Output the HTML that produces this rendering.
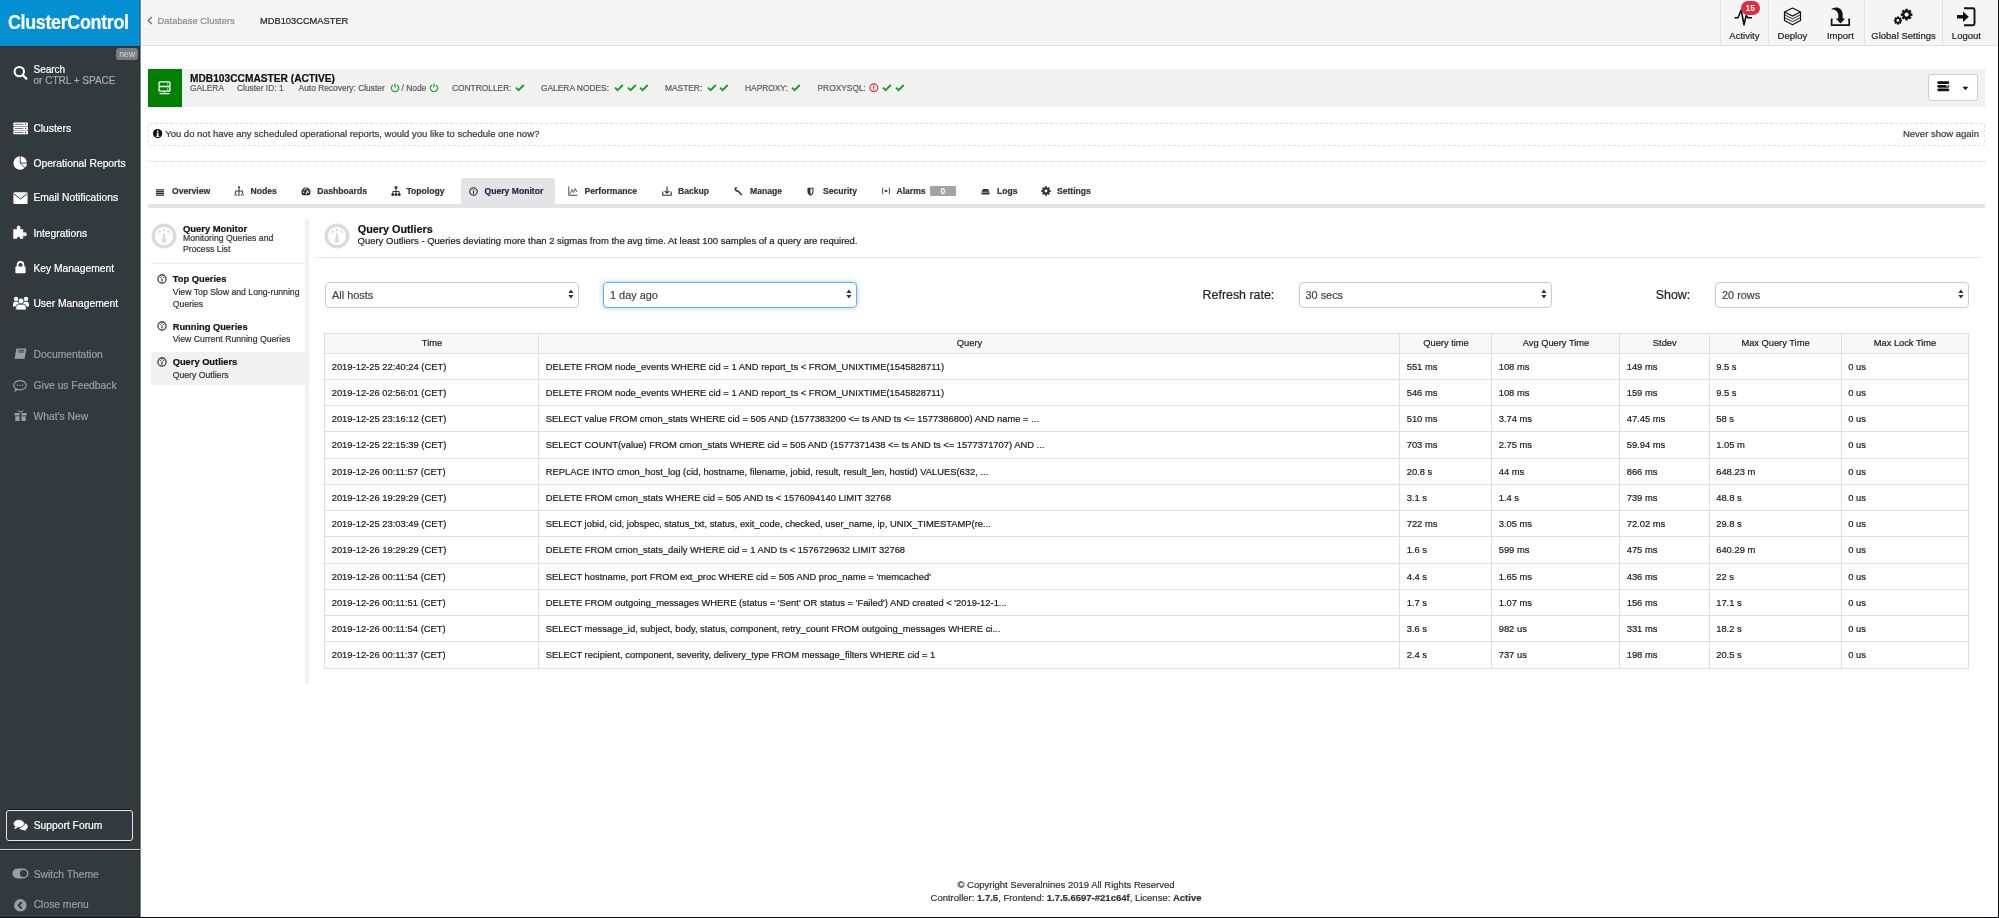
<!DOCTYPE html>
<html><head><meta charset="utf-8"><title>ClusterControl</title>
<style>
html,body{margin:0;padding:0;width:1999px;height:918px;overflow:hidden;background:#fff;position:relative;font-family:"Liberation Sans",sans-serif}
.t{position:absolute;white-space:nowrap}
body{-webkit-font-smoothing:antialiased}
.t{-webkit-text-stroke:0.2px currentColor}
#root{will-change:transform}
b{font-weight:700}
</style></head><body><div id="root" style="position:absolute;left:0;top:0;width:1999px;height:918px">
<div style="position:absolute;left:0px;top:0px;width:140px;height:918px;background:#333a3d"></div>
<div style="position:absolute;left:0px;top:0px;width:140px;height:46px;background:#0590d3"></div>
<div style="position:absolute;left:139px;top:0px;width:1px;height:46px;background:#0479b0"></div>
<div style="position:absolute;left:0px;top:46px;width:139px;height:1px;background:#2a3034"></div>
<div style="position:absolute;left:139px;top:46px;width:1px;height:872px;background:#262d33"></div>
<div class="t" style="left:8.00px;top:11.55px;font-size:20.50px;line-height:20.50px;color:#fff;font-weight:700;letter-spacing:-0.4px;transform:scaleX(0.875);transform-origin:0 0;">ClusterControl</div>
<div style="position:absolute;left:116.3px;top:48px;width:22px;height:12px;background:#7a7c7e;border-radius:3px;color:#d8d9da;font-size:8.8px;line-height:12px;text-align:center">new</div>
<svg style="position:absolute;left:13px;top:65px;" width="15" height="15" viewBox="0 0 15 15"><circle cx="6.3" cy="6.6" r="4.7" fill="none" stroke="#fff" stroke-width="2"/><path d="M9.8 10.1 L13.3 13.6" stroke="#fff" stroke-width="2.2" stroke-linecap="round"/></svg>
<div class="t" style="left:33.50px;top:64.83px;font-size:10.00px;line-height:10.00px;color:#fff;font-weight:400;">Search</div>
<div class="t" style="left:33.50px;top:76.23px;font-size:10.00px;line-height:10.00px;color:#a9abad;font-weight:400;">or CTRL + SPACE</div>
<div class="t" style="left:33.40px;top:124.08px;font-size:10.30px;line-height:10.30px;color:#fff;font-weight:400;">Clusters</div>
<div class="t" style="left:33.40px;top:158.78px;font-size:10.30px;line-height:10.30px;color:#fff;font-weight:400;">Operational Reports</div>
<div class="t" style="left:33.40px;top:193.48px;font-size:10.30px;line-height:10.30px;color:#fff;font-weight:400;">Email Notifications</div>
<div class="t" style="left:33.40px;top:229.38px;font-size:10.30px;line-height:10.30px;color:#fff;font-weight:400;">Integrations</div>
<div class="t" style="left:33.40px;top:263.68px;font-size:10.30px;line-height:10.30px;color:#fff;font-weight:400;">Key Management</div>
<div class="t" style="left:33.40px;top:298.98px;font-size:10.30px;line-height:10.30px;color:#fff;font-weight:400;">User Management</div>
<svg style="position:absolute;left:12.5px;top:121.5px;" width="15.5" height="13" viewBox="0 0 15.5 13"><rect x="0.4" y="0.4" width="14.6" height="3.7" fill="#fff" rx="0.6"/><rect x="1.8" y="1.9" width="8.6" height="0.8" fill="#333a3d" opacity="0.85"/><circle cx="12.6" cy="2.25" r="0.7" fill="#333a3d"/><rect x="0.4" y="4.5" width="14.6" height="3.7" fill="#fff" rx="0.6"/><rect x="1.8" y="6.0" width="8.6" height="0.8" fill="#333a3d" opacity="0.85"/><circle cx="12.6" cy="6.35" r="0.7" fill="#333a3d"/><rect x="0.4" y="8.6" width="14.6" height="3.7" fill="#fff" rx="0.6"/><rect x="1.8" y="10.1" width="8.6" height="0.8" fill="#333a3d" opacity="0.85"/><circle cx="12.6" cy="10.45" r="0.7" fill="#333a3d"/></svg>
<svg style="position:absolute;left:12.5px;top:155.5px;" width="15" height="15" viewBox="0 0 15 15"><circle cx="7.2" cy="7" r="6.8" fill="#fff"/><path d="M7.2 0 V7 H14.2 M7.2 7 L12 11.8" fill="none" stroke="#333a3d" stroke-width="0.9"/></svg>
<svg style="position:absolute;left:12.5px;top:192px;" width="15" height="12.5" viewBox="0 0 15 12.5"><rect x="0.4" y="0.3" width="14.2" height="11.6" rx="1.2" fill="#fff"/><path d="M0.6 1.6 L7.5 6.9 L14.4 1.6" fill="none" stroke="#333a3d" stroke-width="1"/></svg>
<svg style="position:absolute;left:13px;top:225px;" width="15" height="14" viewBox="0 0 15 14"><path d="M0.3 4.2 H4 V3.6 A1.9 1.9 0 1 1 7.2 3.6 V4.2 H10.2 V7.6 H10.9 A1.9 1.9 0 1 1 10.9 10.8 H10.2 V13.8 H7 V13.2 A1.5 1.5 0 0 0 4 13.2 V13.8 H0.3Z" fill="#fff"/></svg>
<svg style="position:absolute;left:15px;top:261px;" width="11" height="12.5" viewBox="0 0 11 12.5"><path d="M2.6 6 V3.9 a2.9 2.9 0 0 1 5.8 0 V6" fill="none" stroke="#fff" stroke-width="1.8"/><rect x="0.4" y="5.6" width="10.2" height="6.6" rx="0.8" fill="#fff"/></svg>
<svg style="position:absolute;left:12.5px;top:294.5px;" width="16" height="15.5" viewBox="0 0 16 15.5"><circle cx="3" cy="4" r="2.2" fill="#fff"/><circle cx="13" cy="4" r="2.2" fill="#fff"/><path d="M0 11.5 V9.2 Q0 6.8 2.4 6.8 H13.6 Q16 6.8 16 9.2 V11.5Z" fill="#fff"/><circle cx="8" cy="6" r="2.9" fill="#fff" stroke="#333a3d" stroke-width="0.8"/><path d="M2.8 15 V12 Q2.8 9.3 5.5 9.3 H10.5 Q13.2 9.3 13.2 12 V15Z" fill="#fff" stroke="#333a3d" stroke-width="0.8"/></svg>
<div class="t" style="left:33.60px;top:349.98px;font-size:10.30px;line-height:10.30px;color:#9b9fa2;font-weight:400;">Documentation</div>
<div class="t" style="left:33.60px;top:381.18px;font-size:10.30px;line-height:10.30px;color:#9b9fa2;font-weight:400;">Give us Feedback</div>
<div class="t" style="left:33.60px;top:412.08px;font-size:10.30px;line-height:10.30px;color:#9b9fa2;font-weight:400;">What&#x27;s New</div>
<svg style="position:absolute;left:14px;top:348px;" width="13" height="12" viewBox="0 0 13 12"><path d="M2.5 0.5 h10 l-2 10.5 h-10z" fill="#9b9fa2"/><path d="M4.5 2.3 h6 M4.2 4 h6" stroke="#333a3d" stroke-width="0.9"/><path d="M0.8 11.2 h9.6" stroke="#333a3d" stroke-width="0.8"/></svg>
<svg style="position:absolute;left:13px;top:380px;" width="14" height="13" viewBox="0 0 14 13"><ellipse cx="7" cy="5.3" rx="6.3" ry="4.6" fill="none" stroke="#9b9fa2" stroke-width="1.2"/><path d="M2.5 8.6 L1.2 12.3 L5.5 9.6" fill="#9b9fa2"/><circle cx="4.4" cy="5.3" r="0.8" fill="#9b9fa2"/><circle cx="7" cy="5.3" r="0.8" fill="#9b9fa2"/><circle cx="9.6" cy="5.3" r="0.8" fill="#9b9fa2"/></svg>
<svg style="position:absolute;left:14px;top:410px;" width="13" height="11" viewBox="0 0 13 11"><path d="M0.5 3 h12 v2.5 h-12z M1.3 6.3 h10.4 v4.7 h-10.4z" fill="#9b9fa2"/><path d="M3.5 0.8 q3 0 3 2.2 q0 -2.2 3 -2.2" fill="none" stroke="#9b9fa2" stroke-width="1"/><rect x="5.6" y="3" width="1.8" height="8" fill="#333a3d"/></svg>
<div style="position:absolute;left:8px;top:809px;width:122px;height:1px;background:#15191b"></div>
<div style="position:absolute;left:8px;top:842px;width:122px;height:1px;background:#1c2022"></div>
<div style="position:absolute;left:6px;top:810px;width:124.6px;height:29.4px;border:1.3px solid #e6e6e6;border-radius:3px"></div>
<div class="t" style="left:33.70px;top:820.68px;font-size:10.30px;line-height:10.30px;color:#fff;font-weight:400;">Support Forum</div>
<svg style="position:absolute;left:13px;top:819px;" width="16" height="13" viewBox="0 0 16 13"><ellipse cx="10.3" cy="7.6" rx="4.4" ry="3.4" fill="#fff"/><path d="M11.5 10 L13.6 12.2 L9.5 10.6Z" fill="#fff"/><ellipse cx="5.8" cy="4.6" rx="5.6" ry="4.1" fill="#fff" stroke="#33393c" stroke-width="0.9"/><path d="M2.2 7.5 L1 10.2 L5 8.4Z" fill="#fff"/></svg>
<div style="position:absolute;left:0px;top:849px;width:140px;height:1px;background:#d9d9d9"></div>
<div style="position:absolute;left:0px;top:850px;width:140px;height:1px;background:#1c2022"></div>
<div class="t" style="left:33.70px;top:869.58px;font-size:10.30px;line-height:10.30px;color:#9b9fa2;font-weight:400;">Switch Theme</div>
<svg style="position:absolute;left:12px;top:868px;" width="17" height="11" viewBox="0 0 17 11"><rect x="0.5" y="0.5" width="16" height="10" rx="5" fill="#9b9fa2"/><circle cx="11.5" cy="5.5" r="3.6" fill="#333a3d"/></svg>
<div class="t" style="left:33.70px;top:900.28px;font-size:10.30px;line-height:10.30px;color:#9b9fa2;font-weight:400;">Close menu</div>
<svg style="position:absolute;left:14px;top:898.5px;" width="13" height="13" viewBox="0 0 13 13"><circle cx="6.3" cy="6.3" r="6.2" fill="#9b9fa2"/><path d="M7.8 3 L4.6 6.3 L7.8 9.6" fill="none" stroke="#333a3d" stroke-width="2"/></svg>
<div style="position:absolute;left:140px;top:0px;width:1px;height:918px;background:#85878a"></div>
<div style="position:absolute;left:141px;top:0px;width:1857px;height:45px;background:#f5f5f5"></div>
<div style="position:absolute;left:141px;top:45px;width:1857px;height:1px;background:#e2e2e2"></div>
<svg style="position:absolute;left:147px;top:16px;" width="6" height="9" viewBox="0 0 6 9"><path d="M4.8 1 L1.3 4.5 L4.8 8" fill="none" stroke="#777" stroke-width="1.6"/></svg>
<div class="t" style="left:157.60px;top:15.94px;font-size:9.40px;line-height:9.40px;color:#8a8a8a;font-weight:400;">Database Clusters</div>
<div class="t" style="left:260.00px;top:16.63px;font-size:9.30px;line-height:9.30px;color:#222;font-weight:400;">MDB103CCMASTER</div>
<div style="position:absolute;left:1720px;top:0px;width:1px;height:45px;background:#e3e3e3"></div>
<div style="position:absolute;left:1768px;top:0px;width:1px;height:45px;background:#e3e3e3"></div>
<div style="position:absolute;left:1864px;top:0px;width:1px;height:45px;background:#e3e3e3"></div>
<div style="position:absolute;left:1942px;top:0px;width:1px;height:45px;background:#e3e3e3"></div>
<div class="t" style="left:1244.40px;width:1000px;text-align:center;top:30.56px;font-size:9.50px;line-height:9.50px;color:#222;font-weight:400;">Activity</div>
<div class="t" style="left:1292.40px;width:1000px;text-align:center;top:30.56px;font-size:9.50px;line-height:9.50px;color:#222;font-weight:400;">Deploy</div>
<div class="t" style="left:1340.40px;width:1000px;text-align:center;top:30.56px;font-size:9.50px;line-height:9.50px;color:#222;font-weight:400;">Import</div>
<div class="t" style="left:1403.50px;width:1000px;text-align:center;top:30.56px;font-size:9.50px;line-height:9.50px;color:#222;font-weight:400;">Global Settings</div>
<div class="t" style="left:1466.40px;width:1000px;text-align:center;top:30.56px;font-size:9.50px;line-height:9.50px;color:#222;font-weight:400;">Logout</div>
<svg style="position:absolute;left:1734px;top:8px;" width="20" height="18" viewBox="0 0 20 18"><path d="M0.5 9.8 H4 L7.2 2 L10 16.8 L12.2 7.5 L14 9.8 H18" fill="none" stroke="#111" stroke-width="1.6" stroke-linejoin="round"/></svg>
<div style="position:absolute;left:1741px;top:1px;width:18.7px;height:14px;background:#e32b3f;border-radius:7px;color:#fff;font-size:8.5px;line-height:14px;text-align:center;font-weight:700">15</div>
<svg style="position:absolute;left:1783px;top:7px;" width="19" height="19" viewBox="0 0 19 19"><path d="M9.5 1 L17.5 5 V13.5 L9.5 17.8 L1.5 13.5 V5 Z" fill="none" stroke="#111" stroke-width="1.2" stroke-linejoin="round"/><path d="M1.5 5 L9.5 9 L17.5 5" fill="none" stroke="#111" stroke-width="1.2"/><path d="M1.5 7.8 L9.5 11.8 L17.5 7.8 M1.5 10.6 L9.5 14.6 L17.5 10.6" fill="none" stroke="#111" stroke-width="0.9"/></svg>
<svg style="position:absolute;left:1830px;top:7px;" width="21" height="20" viewBox="0 0 21 20"><path d="M2.6 12.3 H1.6 V18.2 H19.2 V12.3 H18.2" fill="none" stroke="#111" stroke-width="1.7" stroke-linejoin="round"/><path d="M1.2 2.4 C4.5 -0.6, 12.7 -0.6, 12.7 8 V11.4 H15.2 L10.5 16.4 L5.8 11.4 H8.3 V8.2 C8.3 4.2, 5 2.2, 1.2 2.4 Z" fill="#111"/></svg>
<svg style="position:absolute;left:1893px;top:8px;" width="21" height="18" viewBox="0 0 21 18"><circle cx="13.6" cy="6.6" r="4.3" fill="#111"/><rect x="12.30" y="0.80" width="2.60" height="5.80" fill="#111" transform="rotate(0.0 13.6 6.6)"/><rect x="12.30" y="0.80" width="2.60" height="5.80" fill="#111" transform="rotate(45.0 13.6 6.6)"/><rect x="12.30" y="0.80" width="2.60" height="5.80" fill="#111" transform="rotate(90.0 13.6 6.6)"/><rect x="12.30" y="0.80" width="2.60" height="5.80" fill="#111" transform="rotate(135.0 13.6 6.6)"/><rect x="12.30" y="0.80" width="2.60" height="5.80" fill="#111" transform="rotate(180.0 13.6 6.6)"/><rect x="12.30" y="0.80" width="2.60" height="5.80" fill="#111" transform="rotate(225.0 13.6 6.6)"/><rect x="12.30" y="0.80" width="2.60" height="5.80" fill="#111" transform="rotate(270.0 13.6 6.6)"/><rect x="12.30" y="0.80" width="2.60" height="5.80" fill="#111" transform="rotate(315.0 13.6 6.6)"/><circle cx="13.6" cy="6.6" r="2.1" fill="#f5f5f5"/><circle cx="4.9" cy="12.5" r="3.0" fill="#111"/><rect x="3.95" y="8.40" width="1.90" height="4.10" fill="#111" transform="rotate(0.0 4.9 12.5)"/><rect x="3.95" y="8.40" width="1.90" height="4.10" fill="#111" transform="rotate(45.0 4.9 12.5)"/><rect x="3.95" y="8.40" width="1.90" height="4.10" fill="#111" transform="rotate(90.0 4.9 12.5)"/><rect x="3.95" y="8.40" width="1.90" height="4.10" fill="#111" transform="rotate(135.0 4.9 12.5)"/><rect x="3.95" y="8.40" width="1.90" height="4.10" fill="#111" transform="rotate(180.0 4.9 12.5)"/><rect x="3.95" y="8.40" width="1.90" height="4.10" fill="#111" transform="rotate(225.0 4.9 12.5)"/><rect x="3.95" y="8.40" width="1.90" height="4.10" fill="#111" transform="rotate(270.0 4.9 12.5)"/><rect x="3.95" y="8.40" width="1.90" height="4.10" fill="#111" transform="rotate(315.0 4.9 12.5)"/><circle cx="4.9" cy="12.5" r="1.4" fill="#f5f5f5"/></svg>
<svg style="position:absolute;left:1956px;top:7px;" width="21" height="20" viewBox="0 0 21 20"><path d="M8 1.3 H17 Q18.5 1.3 18.5 2.8 V16.8 Q18.5 18.3 17 18.3 H8" fill="none" stroke="#111" stroke-width="1.9"/><path d="M1 8 H7 V4.5 L12.8 9.8 L7 15 V11.5 H1Z" fill="#111"/></svg>
<div style="position:absolute;left:148px;top:69px;width:1837px;height:38px;background:#f1f1f1"></div>
<div style="position:absolute;left:148px;top:69px;width:34px;height:38px;background:#008000"></div>
<svg style="position:absolute;left:158px;top:81px;" width="14" height="14" viewBox="0 0 14 14"><rect x="1" y="0.8" width="11" height="4.6" rx="1" fill="none" stroke="#fff" stroke-width="1.3"/><rect x="1" y="5.6" width="11" height="4.6" rx="1" fill="none" stroke="#fff" stroke-width="1.3"/><circle cx="9.7" cy="3.1" r="0.7" fill="#fff"/><circle cx="9.7" cy="7.9" r="0.7" fill="#fff"/><path d="M6.5 10.4 V12.2 M1.5 12.6 H11.5" stroke="#fff" stroke-width="1.2"/></svg>
<div class="t" style="left:190.00px;top:73.97px;font-size:10.20px;line-height:10.20px;color:#111;font-weight:700;">MDB103CCMASTER (ACTIVE)</div>
<div class="t" style="left:190.00px;top:84.09px;font-size:8.40px;line-height:8.40px;color:#5a5a5a;font-weight:400;">GALERA</div>
<div class="t" style="left:237.00px;top:84.09px;font-size:8.40px;line-height:8.40px;color:#5a5a5a;font-weight:400;">Cluster ID: 1</div>
<div class="t" style="left:298.60px;top:84.09px;font-size:8.40px;line-height:8.40px;color:#5a5a5a;font-weight:400;">Auto Recovery: Cluster</div>
<div class="t" style="left:401.60px;top:84.09px;font-size:8.40px;line-height:8.40px;color:#5a5a5a;font-weight:400;">/ Node</div>
<svg style="position:absolute;left:389.9px;top:83.3px;" width="10" height="10" viewBox="0 0 10 10"><path d="M3.1 1.9 A3.7 3.7 0 1 0 6.9 1.9" fill="none" stroke="#2aa52a" stroke-width="1.2"/><path d="M5 0.4 V4.6" stroke="#2aa52a" stroke-width="1.3"/></svg>
<svg style="position:absolute;left:429.2px;top:83.3px;" width="10" height="10" viewBox="0 0 10 10"><path d="M3.1 1.9 A3.7 3.7 0 1 0 6.9 1.9" fill="none" stroke="#2aa52a" stroke-width="1.2"/><path d="M5 0.4 V4.6" stroke="#2aa52a" stroke-width="1.3"/></svg>
<div class="t" style="left:452.00px;top:84.09px;font-size:8.40px;line-height:8.40px;color:#5a5a5a;font-weight:400;">CONTROLLER:</div>
<svg style="position:absolute;left:515px;top:84px;" width="10" height="8" viewBox="0 0 10 8"><path d="M1 3.6 L3.6 6.2 L8.8 1" fill="none" stroke="#1e9e1e" stroke-width="1.9"/></svg>
<div class="t" style="left:541.00px;top:84.09px;font-size:8.40px;line-height:8.40px;color:#5a5a5a;font-weight:400;">GALERA NODES:</div>
<svg style="position:absolute;left:614px;top:84px;" width="10" height="8" viewBox="0 0 10 8"><path d="M1 3.6 L3.6 6.2 L8.8 1" fill="none" stroke="#1e9e1e" stroke-width="1.9"/></svg>
<svg style="position:absolute;left:626.5px;top:84px;" width="10" height="8" viewBox="0 0 10 8"><path d="M1 3.6 L3.6 6.2 L8.8 1" fill="none" stroke="#1e9e1e" stroke-width="1.9"/></svg>
<svg style="position:absolute;left:639px;top:84px;" width="10" height="8" viewBox="0 0 10 8"><path d="M1 3.6 L3.6 6.2 L8.8 1" fill="none" stroke="#1e9e1e" stroke-width="1.9"/></svg>
<div class="t" style="left:665.00px;top:84.09px;font-size:8.40px;line-height:8.40px;color:#5a5a5a;font-weight:400;">MASTER:</div>
<svg style="position:absolute;left:706.5px;top:84px;" width="10" height="8" viewBox="0 0 10 8"><path d="M1 3.6 L3.6 6.2 L8.8 1" fill="none" stroke="#1e9e1e" stroke-width="1.9"/></svg>
<svg style="position:absolute;left:719px;top:84px;" width="10" height="8" viewBox="0 0 10 8"><path d="M1 3.6 L3.6 6.2 L8.8 1" fill="none" stroke="#1e9e1e" stroke-width="1.9"/></svg>
<div class="t" style="left:745.00px;top:84.09px;font-size:8.40px;line-height:8.40px;color:#5a5a5a;font-weight:400;">HAPROXY:</div>
<svg style="position:absolute;left:790.5px;top:84px;" width="10" height="8" viewBox="0 0 10 8"><path d="M1 3.6 L3.6 6.2 L8.8 1" fill="none" stroke="#1e9e1e" stroke-width="1.9"/></svg>
<div class="t" style="left:817.50px;top:84.09px;font-size:8.40px;line-height:8.40px;color:#5a5a5a;font-weight:400;">PROXYSQL:</div>
<svg style="position:absolute;left:869px;top:83px;" width="10" height="10" viewBox="0 0 10 10"><circle cx="4.8" cy="4.8" r="3.9" fill="none" stroke="#e0262e" stroke-width="1.1"/><path d="M4.8 2.4 V5.4" stroke="#e0262e" stroke-width="1.2"/><circle cx="4.8" cy="7" r="0.65" fill="#e0262e"/></svg>
<svg style="position:absolute;left:882px;top:84px;" width="10" height="8" viewBox="0 0 10 8"><path d="M1 3.6 L3.6 6.2 L8.8 1" fill="none" stroke="#1e9e1e" stroke-width="1.9"/></svg>
<svg style="position:absolute;left:894.5px;top:84px;" width="10" height="8" viewBox="0 0 10 8"><path d="M1 3.6 L3.6 6.2 L8.8 1" fill="none" stroke="#1e9e1e" stroke-width="1.9"/></svg>
<div style="position:absolute;left:1928px;top:74px;width:48px;height:25px;background:#fff;border:1px solid #cfcfcf;border-radius:3px"></div>
<svg style="position:absolute;left:1937px;top:81px;" width="13" height="11" viewBox="0 0 13 11"><rect x="0.3" y="0.3" width="12" height="2.8" rx="1.4" fill="#111"/><rect x="0.3" y="3.9" width="12" height="2.8" rx="1.4" fill="#111"/><rect x="0.3" y="7.5" width="12" height="2.8" rx="1.4" fill="#111"/><rect x="9" y="4.3" width="2.5" height="1.2" fill="#ddd"/></svg>
<svg style="position:absolute;left:1962px;top:86px;" width="7" height="5" viewBox="0 0 7 5"><path d="M0.5 0.8 H6.3 L3.4 4.2Z" fill="#111"/></svg>
<div style="position:absolute;left:148px;top:123px;width:1835px;height:21px;border:1px dashed #dedede;border-radius:2px"></div>
<svg style="position:absolute;left:153px;top:129px;" width="10" height="10" viewBox="0 0 10 10"><circle cx="4.6" cy="4.6" r="4.6" fill="#111"/><rect x="3.8" y="3.8" width="1.7" height="3.8" fill="#fff"/><circle cx="4.65" cy="2.4" r="0.9" fill="#fff"/><rect x="3" y="6.9" width="3.3" height="0.9" fill="#fff"/></svg>
<div class="t" style="left:165.20px;top:129.36px;font-size:9.50px;line-height:9.50px;color:#3a3335;font-weight:400;">You do not have any scheduled operational reports, would you like to schedule one now?</div>
<div class="t" style="left:979.00px;width:1000px;text-align:right;top:129.36px;font-size:9.50px;line-height:9.50px;color:#3a3335;font-weight:400;">Never show again</div>
<div style="position:absolute;left:148px;top:161px;width:1837px;height:0;border-top:1px dotted #dadada"></div>
<div style="position:absolute;left:148px;top:204px;width:1837px;height:4px;background:#e4e4e4"></div>
<div style="position:absolute;left:461px;top:178px;width:94px;height:26px;background:#e4e4e4;border-radius:3px 3px 0 0"></div>
<div class="t" style="left:172.00px;top:187.12px;font-size:8.60px;line-height:8.60px;color:#3a3032;font-weight:700;">Overview</div>
<div class="t" style="left:250.60px;top:187.12px;font-size:8.60px;line-height:8.60px;color:#3a3032;font-weight:700;">Nodes</div>
<div class="t" style="left:317.30px;top:187.12px;font-size:8.60px;line-height:8.60px;color:#3a3032;font-weight:700;">Dashboards</div>
<div class="t" style="left:406.50px;top:187.12px;font-size:8.60px;line-height:8.60px;color:#3a3032;font-weight:700;">Topology</div>
<div class="t" style="left:484.50px;top:187.12px;font-size:8.60px;line-height:8.60px;color:#1f2840;font-weight:700;">Query Monitor</div>
<div class="t" style="left:584.50px;top:187.12px;font-size:8.60px;line-height:8.60px;color:#3a3032;font-weight:700;">Performance</div>
<div class="t" style="left:678.00px;top:187.12px;font-size:8.60px;line-height:8.60px;color:#3a3032;font-weight:700;">Backup</div>
<div class="t" style="left:750.00px;top:187.12px;font-size:8.60px;line-height:8.60px;color:#3a3032;font-weight:700;">Manage</div>
<div class="t" style="left:823.00px;top:187.12px;font-size:8.60px;line-height:8.60px;color:#3a3032;font-weight:700;">Security</div>
<div class="t" style="left:896.50px;top:187.12px;font-size:8.60px;line-height:8.60px;color:#3a3032;font-weight:700;">Alarms</div>
<div class="t" style="left:997.00px;top:187.12px;font-size:8.60px;line-height:8.60px;color:#3a3032;font-weight:700;">Logs</div>
<div class="t" style="left:1057.00px;top:187.12px;font-size:8.60px;line-height:8.60px;color:#3a3032;font-weight:700;">Settings</div>
<svg style="position:absolute;left:156px;top:188.5px;" width="8" height="7" viewBox="0 0 8 7"><path d="M0 0.8 H8 M0 2.6 H8 M0 4.4 H8 M0 6.2 H8" stroke="#3a3032" stroke-width="1.2"/></svg>
<svg style="position:absolute;left:234px;top:186px;" width="10" height="10" viewBox="0 0 10 10"><circle cx="5" cy="1.2" r="1" fill="#3a3032"/><path d="M5 2 V5 M1.5 5 H8.5 M1.5 5 V7.5 M5 5 V7.5 M8.5 5 V7.5" stroke="#3a3032" stroke-width="1"/><circle cx="1.5" cy="8.7" r="1" fill="none" stroke="#3a3032" stroke-width="0.7"/><circle cx="5" cy="8.7" r="1" fill="none" stroke="#3a3032" stroke-width="0.7"/><circle cx="8.5" cy="8.7" r="1" fill="none" stroke="#3a3032" stroke-width="0.7"/></svg>
<svg style="position:absolute;left:301px;top:186px;" width="10" height="10" viewBox="0 0 10 10"><path d="M1.6 9.2 A4.6 4.6 0 1 1 8.4 9.2 Z" fill="#3a3032"/><path d="M5 8 L6.8 4.2" stroke="#fff" stroke-width="1.1"/><circle cx="2.5" cy="6.2" r="0.7" fill="#fff"/><circle cx="7.5" cy="6.2" r="0.7" fill="#fff"/><circle cx="3.3" cy="3.6" r="0.7" fill="#fff"/><circle cx="5" cy="2.8" r="0.7" fill="#fff"/></svg>
<svg style="position:absolute;left:391px;top:186px;" width="10" height="10" viewBox="0 0 10 10"><circle cx="5" cy="1.6" r="1.5" fill="#3a3032"/><path d="M5 3 V5.5 M1.8 5.5 H8.2 M1.8 5.5 V7.5 M8.2 5.5 V7.5 M5 5.5 V7.5" stroke="#3a3032" stroke-width="1"/><circle cx="1.8" cy="8.5" r="1.5" fill="#3a3032"/><circle cx="5" cy="8.5" r="1.5" fill="#3a3032"/><circle cx="8.2" cy="8.5" r="1.5" fill="#3a3032"/></svg>
<svg style="position:absolute;left:469px;top:187px;" width="9" height="9" viewBox="0 0 9 9"><circle cx="4.5" cy="4.5" r="3.8" fill="none" stroke="#1f2840" stroke-width="1.1"/><path d="M4.5 4 V7" stroke="#1f2840" stroke-width="1"/><circle cx="3" cy="3" r="0.5" fill="#1f2840"/><circle cx="6" cy="3" r="0.5" fill="#1f2840"/><circle cx="4.5" cy="2.3" r="0.5" fill="#1f2840"/></svg>
<svg style="position:absolute;left:568px;top:186px;" width="10" height="10" viewBox="0 0 10 10"><path d="M0.8 0.5 V9.3 H9.5" fill="none" stroke="#3a3032" stroke-width="0.9"/><path d="M2.2 7.8 L4 3.5 L5.6 6.5 L7.2 2.5 L8.8 6" fill="none" stroke="#3a3032" stroke-width="0.8"/></svg>
<svg style="position:absolute;left:662px;top:186px;" width="10" height="10" viewBox="0 0 10 10"><path d="M0.8 5.5 V9.2 H9.2 V5.5" fill="none" stroke="#3a3032" stroke-width="1.1"/><path d="M5 0.5 V7 M2.6 4.8 L5 7.2 L7.4 4.8" fill="none" stroke="#3a3032" stroke-width="1.1"/></svg>
<svg style="position:absolute;left:734px;top:186px;" width="9" height="10" viewBox="0 0 9 10"><path d="M1.5 1.5 A2.8 2.8 0 0 0 4.3 5.3 L7.8 9" fill="none" stroke="#3a3032" stroke-width="1.6"/><path d="M1 3.5 L3.2 1" stroke="#3a3032" stroke-width="1"/></svg>
<svg style="position:absolute;left:807px;top:187px;" width="7" height="9" viewBox="0 0 7 9"><path d="M0.5 0.8 H6.5 V4.5 Q6.5 7.5 3.5 8.8 Q0.5 7.5 0.5 4.5Z" fill="#3a3032"/><path d="M3.5 1.8 V7.5 Q5.4 6.5 5.4 4.4 V1.8Z" fill="#fff"/></svg>
<svg style="position:absolute;left:880.5px;top:187px;" width="10" height="8" viewBox="0 0 10 8"><path d="M2 0.8 Q0.5 4 2 7.2 M8 0.8 Q9.5 4 8 7.2" fill="none" stroke="#3a3032" stroke-width="0.9"/><circle cx="5" cy="4" r="1.1" fill="#3a3032"/><path d="M3.3 4 H6.7" stroke="#3a3032" stroke-width="0.8"/></svg>
<div style="position:absolute;left:930px;top:186px;width:26px;height:10px;background:#a3a3a3;border-radius:1px;color:#fff;font-size:8.6px;line-height:10px;text-align:center;font-weight:700">0</div>
<svg style="position:absolute;left:980.5px;top:188px;" width="9" height="7" viewBox="0 0 9 7"><path d="M0.5 4 L2 1 H7 L8.5 4 V6.5 H0.5Z" fill="#3a3032"/><path d="M1 4.2 H8" stroke="#fff" stroke-width="0.6"/></svg>
<svg style="position:absolute;left:1041px;top:186px;" width="10" height="10" viewBox="0 0 10 10"><circle cx="5" cy="5" r="3.4" fill="#3a3032"/><rect x="3.95" y="0.30" width="2.10" height="4.70" fill="#3a3032" transform="rotate(0.0 5 5)"/><rect x="3.95" y="0.30" width="2.10" height="4.70" fill="#3a3032" transform="rotate(45.0 5 5)"/><rect x="3.95" y="0.30" width="2.10" height="4.70" fill="#3a3032" transform="rotate(90.0 5 5)"/><rect x="3.95" y="0.30" width="2.10" height="4.70" fill="#3a3032" transform="rotate(135.0 5 5)"/><rect x="3.95" y="0.30" width="2.10" height="4.70" fill="#3a3032" transform="rotate(180.0 5 5)"/><rect x="3.95" y="0.30" width="2.10" height="4.70" fill="#3a3032" transform="rotate(225.0 5 5)"/><rect x="3.95" y="0.30" width="2.10" height="4.70" fill="#3a3032" transform="rotate(270.0 5 5)"/><rect x="3.95" y="0.30" width="2.10" height="4.70" fill="#3a3032" transform="rotate(315.0 5 5)"/><circle cx="5" cy="5" r="1.4" fill="#fff"/></svg>
<div style="position:absolute;left:305px;top:219px;width:4px;height:465px;background:#f2f2f2"></div>
<svg style="position:absolute;left:151px;top:223px;" width="26" height="26" viewBox="0 0 26 26"><circle cx="13" cy="13" r="10.8" fill="none" stroke="#dcdcdc" stroke-width="3.4"/><circle cx="13" cy="7" r="1.3" fill="#dcdcdc"/><circle cx="8.5" cy="8.6" r="1.3" fill="#dcdcdc"/><circle cx="17.5" cy="8.6" r="1.3" fill="#dcdcdc"/><path d="M12.3 10 L13.7 10 L15.3 19.5 L10.7 19.5Z" fill="#dcdcdc"/></svg>
<div class="t" style="left:183.00px;top:223.94px;font-size:9.40px;line-height:9.40px;color:#111;font-weight:700;">Query Monitor</div>
<div class="t" style="left:183.00px;top:234.04px;font-size:8.70px;line-height:8.70px;color:#333;font-weight:400;">Monitoring Queries and</div>
<div class="t" style="left:183.00px;top:245.44px;font-size:8.70px;line-height:8.70px;color:#333;font-weight:400;">Process List</div>
<div style="position:absolute;left:151px;top:263px;width:154px;height:1px;background:#ededed"></div>
<svg style="position:absolute;left:157px;top:273.5px;" width="10" height="10" viewBox="0 0 10 10"><circle cx="5" cy="5" r="4.1" fill="none" stroke="#222" stroke-width="1.1"/><path d="M5 4.5 V7.6" stroke="#222" stroke-width="1.1"/><circle cx="3.3" cy="3.6" r="0.55" fill="#222"/><circle cx="6.7" cy="3.6" r="0.55" fill="#222"/><circle cx="5" cy="2.7" r="0.55" fill="#222"/></svg>
<div class="t" style="left:172.80px;top:274.73px;font-size:9.30px;line-height:9.30px;color:#111;font-weight:700;">Top Queries</div>
<div class="t" style="left:172.80px;top:287.84px;font-size:8.70px;line-height:8.70px;color:#333;font-weight:400;">View Top Slow and Long-running</div>
<div class="t" style="left:172.80px;top:300.44px;font-size:8.70px;line-height:8.70px;color:#333;font-weight:400;">Queries</div>
<svg style="position:absolute;left:157px;top:321px;" width="10" height="10" viewBox="0 0 10 10"><circle cx="5" cy="5" r="4.1" fill="none" stroke="#222" stroke-width="1.1"/><path d="M5 4.5 V7.6" stroke="#222" stroke-width="1.1"/><circle cx="3.3" cy="3.6" r="0.55" fill="#222"/><circle cx="6.7" cy="3.6" r="0.55" fill="#222"/><circle cx="5" cy="2.7" r="0.55" fill="#222"/></svg>
<div style="position:absolute;left:151px;top:352px;width:154px;height:33px;background:#f1f1f1;border-radius:3px 0 0 3px"></div>
<div class="t" style="left:172.70px;top:322.73px;font-size:9.30px;line-height:9.30px;color:#111;font-weight:700;">Running Queries</div>
<div class="t" style="left:172.70px;top:335.24px;font-size:8.70px;line-height:8.70px;color:#333;font-weight:400;">View Current Running Queries</div>
<svg style="position:absolute;left:157px;top:357px;" width="10" height="10" viewBox="0 0 10 10"><circle cx="5" cy="5" r="4.1" fill="none" stroke="#222" stroke-width="1.1"/><path d="M5 4.5 V7.6" stroke="#222" stroke-width="1.1"/><circle cx="3.3" cy="3.6" r="0.55" fill="#222"/><circle cx="6.7" cy="3.6" r="0.55" fill="#222"/><circle cx="5" cy="2.7" r="0.55" fill="#222"/></svg>
<div class="t" style="left:172.70px;top:358.43px;font-size:9.30px;line-height:9.30px;color:#111;font-weight:700;">Query Outliers</div>
<div class="t" style="left:172.70px;top:370.64px;font-size:8.70px;line-height:8.70px;color:#333;font-weight:400;">Query Outliers</div>
<svg style="position:absolute;left:324px;top:222.5px;" width="26" height="26" viewBox="0 0 26 26"><circle cx="13" cy="13" r="10.8" fill="none" stroke="#dcdcdc" stroke-width="3.4"/><circle cx="13" cy="7" r="1.3" fill="#dcdcdc"/><circle cx="8.5" cy="8.6" r="1.3" fill="#dcdcdc"/><circle cx="17.5" cy="8.6" r="1.3" fill="#dcdcdc"/><path d="M12.3 10 L13.7 10 L15.3 19.5 L10.7 19.5Z" fill="#dcdcdc"/></svg>
<div class="t" style="left:357.80px;top:224.26px;font-size:10.80px;line-height:10.80px;color:#111;font-weight:700;">Query Outliers</div>
<div class="t" style="left:357.50px;top:236.16px;font-size:9.50px;line-height:9.50px;color:#222;font-weight:400;">Query Outliers - Queries deviating more than 2 sigmas from the avg time. At least 100 samples of a query are required.</div>
<div style="position:absolute;left:315px;top:257px;width:1667px;height:1px;background:#e6e6e6"></div>
<div style="position:absolute;left:325px;top:282px;width:252px;height:24px;border:1px solid #cccccc;border-radius:4px;background:#fff;"></div>
<div class="t" style="left:332.00px;top:289.77px;font-size:10.90px;line-height:10.90px;color:#444;font-weight:400;">All hosts</div>
<svg style="position:absolute;left:568px;top:289px;" width="6" height="10" viewBox="0 0 6 10"><path d="M0.3 4 L2.9 0.5 L5.5 4Z M0.3 6 L2.9 9.5 L5.5 6Z" fill="#333"/></svg>
<div style="position:absolute;left:603px;top:282px;width:252px;height:24px;border:1px solid #66afe9;border-radius:4px;background:#fff;box-shadow:0 0 5px rgba(102,175,233,0.6);"></div>
<div class="t" style="left:610.00px;top:289.77px;font-size:10.90px;line-height:10.90px;color:#444;font-weight:400;">1 day ago</div>
<svg style="position:absolute;left:846px;top:289px;" width="6" height="10" viewBox="0 0 6 10"><path d="M0.3 4 L2.9 0.5 L5.5 4Z M0.3 6 L2.9 9.5 L5.5 6Z" fill="#333"/></svg>
<div class="t" style="left:1202.60px;top:288.50px;font-size:12.40px;line-height:12.40px;color:#222;font-weight:400;">Refresh rate:</div>
<div style="position:absolute;left:1298.5px;top:282px;width:251.5px;height:24px;border:1px solid #cccccc;border-radius:4px;background:#fff;"></div>
<div class="t" style="left:1305.50px;top:289.77px;font-size:10.90px;line-height:10.90px;color:#444;font-weight:400;">30 secs</div>
<svg style="position:absolute;left:1541.0px;top:289px;" width="6" height="10" viewBox="0 0 6 10"><path d="M0.3 4 L2.9 0.5 L5.5 4Z M0.3 6 L2.9 9.5 L5.5 6Z" fill="#333"/></svg>
<div class="t" style="left:1655.80px;top:288.50px;font-size:12.40px;line-height:12.40px;color:#222;font-weight:400;">Show:</div>
<div style="position:absolute;left:1715px;top:282px;width:252px;height:24px;border:1px solid #cccccc;border-radius:4px;background:#fff;"></div>
<div class="t" style="left:1722.00px;top:289.77px;font-size:10.90px;line-height:10.90px;color:#444;font-weight:400;">20 rows</div>
<svg style="position:absolute;left:1958px;top:289px;" width="6" height="10" viewBox="0 0 6 10"><path d="M0.3 4 L2.9 0.5 L5.5 4Z M0.3 6 L2.9 9.5 L5.5 6Z" fill="#333"/></svg>
<div style="position:absolute;left:324px;top:333px;width:1644px;height:20px;background:#f8f8f8"></div>
<div style="position:absolute;left:324px;top:333px;width:1645px;height:1px;background:#e0e0e0"></div>
<div style="position:absolute;left:324px;top:353px;width:1645px;height:1px;background:#e0e0e0"></div>
<div style="position:absolute;left:324px;top:379px;width:1645px;height:1px;background:#e0e0e0"></div>
<div style="position:absolute;left:324px;top:405px;width:1645px;height:1px;background:#e0e0e0"></div>
<div style="position:absolute;left:324px;top:431px;width:1645px;height:1px;background:#e0e0e0"></div>
<div style="position:absolute;left:324px;top:458px;width:1645px;height:1px;background:#e0e0e0"></div>
<div style="position:absolute;left:324px;top:484px;width:1645px;height:1px;background:#e0e0e0"></div>
<div style="position:absolute;left:324px;top:510px;width:1645px;height:1px;background:#e0e0e0"></div>
<div style="position:absolute;left:324px;top:536px;width:1645px;height:1px;background:#e0e0e0"></div>
<div style="position:absolute;left:324px;top:563px;width:1645px;height:1px;background:#e0e0e0"></div>
<div style="position:absolute;left:324px;top:589px;width:1645px;height:1px;background:#e0e0e0"></div>
<div style="position:absolute;left:324px;top:615px;width:1645px;height:1px;background:#e0e0e0"></div>
<div style="position:absolute;left:324px;top:641px;width:1645px;height:1px;background:#e0e0e0"></div>
<div style="position:absolute;left:324px;top:668px;width:1645px;height:1px;background:#e0e0e0"></div>
<div style="position:absolute;left:324px;top:333px;width:1px;height:336px;background:#e0e0e0"></div>
<div style="position:absolute;left:538px;top:333px;width:1px;height:336px;background:#e0e0e0"></div>
<div style="position:absolute;left:1399px;top:333px;width:1px;height:336px;background:#e0e0e0"></div>
<div style="position:absolute;left:1491px;top:333px;width:1px;height:336px;background:#e0e0e0"></div>
<div style="position:absolute;left:1619px;top:333px;width:1px;height:336px;background:#e0e0e0"></div>
<div style="position:absolute;left:1709px;top:333px;width:1px;height:336px;background:#e0e0e0"></div>
<div style="position:absolute;left:1841px;top:333px;width:1px;height:336px;background:#e0e0e0"></div>
<div style="position:absolute;left:1968px;top:333px;width:1px;height:336px;background:#e0e0e0"></div>
<div class="t" style="left:-68.00px;width:1000px;text-align:center;top:339.13px;font-size:9.30px;line-height:9.30px;color:#1a1a1a;font-weight:400;">Time</div>
<div class="t" style="left:469.50px;width:1000px;text-align:center;top:339.13px;font-size:9.30px;line-height:9.30px;color:#1a1a1a;font-weight:400;">Query</div>
<div class="t" style="left:946.00px;width:1000px;text-align:center;top:339.13px;font-size:9.30px;line-height:9.30px;color:#1a1a1a;font-weight:400;">Query time</div>
<div class="t" style="left:1056.00px;width:1000px;text-align:center;top:339.13px;font-size:9.30px;line-height:9.30px;color:#1a1a1a;font-weight:400;">Avg Query Time</div>
<div class="t" style="left:1164.75px;width:1000px;text-align:center;top:339.13px;font-size:9.30px;line-height:9.30px;color:#1a1a1a;font-weight:400;">Stdev</div>
<div class="t" style="left:1275.50px;width:1000px;text-align:center;top:339.13px;font-size:9.30px;line-height:9.30px;color:#1a1a1a;font-weight:400;">Max Query Time</div>
<div class="t" style="left:1405.00px;width:1000px;text-align:center;top:339.13px;font-size:9.30px;line-height:9.30px;color:#1a1a1a;font-weight:400;">Max Lock Time</div>
<div class="t" style="left:331.70px;top:361.54px;font-size:9.40px;line-height:9.40px;color:#1a1a1a;font-weight:400;">2019-12-25 22:40:24 (CET)</div>
<div class="t" style="left:545.70px;top:361.54px;font-size:9.40px;line-height:9.40px;color:#1a1a1a;font-weight:400;">DELETE FROM node_events WHERE cid = 1 AND report_ts &lt; FROM_UNIXTIME(1545828711)</div>
<div class="t" style="left:1406.70px;top:361.54px;font-size:9.40px;line-height:9.40px;color:#1a1a1a;font-weight:400;">551 ms</div>
<div class="t" style="left:1498.70px;top:361.54px;font-size:9.40px;line-height:9.40px;color:#1a1a1a;font-weight:400;">108 ms</div>
<div class="t" style="left:1626.70px;top:361.54px;font-size:9.40px;line-height:9.40px;color:#1a1a1a;font-weight:400;">149 ms</div>
<div class="t" style="left:1716.20px;top:361.54px;font-size:9.40px;line-height:9.40px;color:#1a1a1a;font-weight:400;">9.5 s</div>
<div class="t" style="left:1848.20px;top:361.54px;font-size:9.40px;line-height:9.40px;color:#1a1a1a;font-weight:400;">0 us</div>
<div class="t" style="left:331.70px;top:387.79px;font-size:9.40px;line-height:9.40px;color:#1a1a1a;font-weight:400;">2019-12-26 02:56:01 (CET)</div>
<div class="t" style="left:545.70px;top:387.79px;font-size:9.40px;line-height:9.40px;color:#1a1a1a;font-weight:400;">DELETE FROM node_events WHERE cid = 1 AND report_ts &lt; FROM_UNIXTIME(1545828711)</div>
<div class="t" style="left:1406.70px;top:387.79px;font-size:9.40px;line-height:9.40px;color:#1a1a1a;font-weight:400;">546 ms</div>
<div class="t" style="left:1498.70px;top:387.79px;font-size:9.40px;line-height:9.40px;color:#1a1a1a;font-weight:400;">108 ms</div>
<div class="t" style="left:1626.70px;top:387.79px;font-size:9.40px;line-height:9.40px;color:#1a1a1a;font-weight:400;">159 ms</div>
<div class="t" style="left:1716.20px;top:387.79px;font-size:9.40px;line-height:9.40px;color:#1a1a1a;font-weight:400;">9.5 s</div>
<div class="t" style="left:1848.20px;top:387.79px;font-size:9.40px;line-height:9.40px;color:#1a1a1a;font-weight:400;">0 us</div>
<div class="t" style="left:331.70px;top:414.04px;font-size:9.40px;line-height:9.40px;color:#1a1a1a;font-weight:400;">2019-12-25 23:16:12 (CET)</div>
<div class="t" style="left:545.70px;top:414.04px;font-size:9.40px;line-height:9.40px;color:#1a1a1a;font-weight:400;">SELECT value FROM cmon_stats WHERE cid = 505 AND (1577383200 &lt;= ts AND ts &lt;= 1577386800) AND name = ...</div>
<div class="t" style="left:1406.70px;top:414.04px;font-size:9.40px;line-height:9.40px;color:#1a1a1a;font-weight:400;">510 ms</div>
<div class="t" style="left:1498.70px;top:414.04px;font-size:9.40px;line-height:9.40px;color:#1a1a1a;font-weight:400;">3.74 ms</div>
<div class="t" style="left:1626.70px;top:414.04px;font-size:9.40px;line-height:9.40px;color:#1a1a1a;font-weight:400;">47.45 ms</div>
<div class="t" style="left:1716.20px;top:414.04px;font-size:9.40px;line-height:9.40px;color:#1a1a1a;font-weight:400;">58 s</div>
<div class="t" style="left:1848.20px;top:414.04px;font-size:9.40px;line-height:9.40px;color:#1a1a1a;font-weight:400;">0 us</div>
<div class="t" style="left:331.70px;top:440.29px;font-size:9.40px;line-height:9.40px;color:#1a1a1a;font-weight:400;">2019-12-25 22:15:39 (CET)</div>
<div class="t" style="left:545.70px;top:440.29px;font-size:9.40px;line-height:9.40px;color:#1a1a1a;font-weight:400;">SELECT COUNT(value) FROM cmon_stats WHERE cid = 505 AND (1577371438 &lt;= ts AND ts &lt;= 1577371707) AND ...</div>
<div class="t" style="left:1406.70px;top:440.29px;font-size:9.40px;line-height:9.40px;color:#1a1a1a;font-weight:400;">703 ms</div>
<div class="t" style="left:1498.70px;top:440.29px;font-size:9.40px;line-height:9.40px;color:#1a1a1a;font-weight:400;">2.75 ms</div>
<div class="t" style="left:1626.70px;top:440.29px;font-size:9.40px;line-height:9.40px;color:#1a1a1a;font-weight:400;">59.94 ms</div>
<div class="t" style="left:1716.20px;top:440.29px;font-size:9.40px;line-height:9.40px;color:#1a1a1a;font-weight:400;">1.05 m</div>
<div class="t" style="left:1848.20px;top:440.29px;font-size:9.40px;line-height:9.40px;color:#1a1a1a;font-weight:400;">0 us</div>
<div class="t" style="left:331.70px;top:466.54px;font-size:9.40px;line-height:9.40px;color:#1a1a1a;font-weight:400;">2019-12-26 00:11:57 (CET)</div>
<div class="t" style="left:545.70px;top:466.54px;font-size:9.40px;line-height:9.40px;color:#1a1a1a;font-weight:400;">REPLACE INTO cmon_host_log (cid, hostname, filename, jobid, result, result_len, hostid) VALUES(632, ...</div>
<div class="t" style="left:1406.70px;top:466.54px;font-size:9.40px;line-height:9.40px;color:#1a1a1a;font-weight:400;">20.8 s</div>
<div class="t" style="left:1498.70px;top:466.54px;font-size:9.40px;line-height:9.40px;color:#1a1a1a;font-weight:400;">44 ms</div>
<div class="t" style="left:1626.70px;top:466.54px;font-size:9.40px;line-height:9.40px;color:#1a1a1a;font-weight:400;">866 ms</div>
<div class="t" style="left:1716.20px;top:466.54px;font-size:9.40px;line-height:9.40px;color:#1a1a1a;font-weight:400;">648.23 m</div>
<div class="t" style="left:1848.20px;top:466.54px;font-size:9.40px;line-height:9.40px;color:#1a1a1a;font-weight:400;">0 us</div>
<div class="t" style="left:331.70px;top:492.79px;font-size:9.40px;line-height:9.40px;color:#1a1a1a;font-weight:400;">2019-12-26 19:29:29 (CET)</div>
<div class="t" style="left:545.70px;top:492.79px;font-size:9.40px;line-height:9.40px;color:#1a1a1a;font-weight:400;">DELETE FROM cmon_stats WHERE cid = 505 AND ts &lt; 1576094140 LIMIT 32768</div>
<div class="t" style="left:1406.70px;top:492.79px;font-size:9.40px;line-height:9.40px;color:#1a1a1a;font-weight:400;">3.1 s</div>
<div class="t" style="left:1498.70px;top:492.79px;font-size:9.40px;line-height:9.40px;color:#1a1a1a;font-weight:400;">1.4 s</div>
<div class="t" style="left:1626.70px;top:492.79px;font-size:9.40px;line-height:9.40px;color:#1a1a1a;font-weight:400;">739 ms</div>
<div class="t" style="left:1716.20px;top:492.79px;font-size:9.40px;line-height:9.40px;color:#1a1a1a;font-weight:400;">48.8 s</div>
<div class="t" style="left:1848.20px;top:492.79px;font-size:9.40px;line-height:9.40px;color:#1a1a1a;font-weight:400;">0 us</div>
<div class="t" style="left:331.70px;top:519.04px;font-size:9.40px;line-height:9.40px;color:#1a1a1a;font-weight:400;">2019-12-25 23:03:49 (CET)</div>
<div class="t" style="left:545.70px;top:519.04px;font-size:9.40px;line-height:9.40px;color:#1a1a1a;font-weight:400;">SELECT jobid, cid, jobspec, status_txt, status, exit_code, checked, user_name, ip, UNIX_TIMESTAMP(re...</div>
<div class="t" style="left:1406.70px;top:519.04px;font-size:9.40px;line-height:9.40px;color:#1a1a1a;font-weight:400;">722 ms</div>
<div class="t" style="left:1498.70px;top:519.04px;font-size:9.40px;line-height:9.40px;color:#1a1a1a;font-weight:400;">3.05 ms</div>
<div class="t" style="left:1626.70px;top:519.04px;font-size:9.40px;line-height:9.40px;color:#1a1a1a;font-weight:400;">72.02 ms</div>
<div class="t" style="left:1716.20px;top:519.04px;font-size:9.40px;line-height:9.40px;color:#1a1a1a;font-weight:400;">29.8 s</div>
<div class="t" style="left:1848.20px;top:519.04px;font-size:9.40px;line-height:9.40px;color:#1a1a1a;font-weight:400;">0 us</div>
<div class="t" style="left:331.70px;top:545.29px;font-size:9.40px;line-height:9.40px;color:#1a1a1a;font-weight:400;">2019-12-26 19:29:29 (CET)</div>
<div class="t" style="left:545.70px;top:545.29px;font-size:9.40px;line-height:9.40px;color:#1a1a1a;font-weight:400;">DELETE FROM cmon_stats_daily WHERE cid = 1 AND ts &lt; 1576729632 LIMIT 32768</div>
<div class="t" style="left:1406.70px;top:545.29px;font-size:9.40px;line-height:9.40px;color:#1a1a1a;font-weight:400;">1.6 s</div>
<div class="t" style="left:1498.70px;top:545.29px;font-size:9.40px;line-height:9.40px;color:#1a1a1a;font-weight:400;">599 ms</div>
<div class="t" style="left:1626.70px;top:545.29px;font-size:9.40px;line-height:9.40px;color:#1a1a1a;font-weight:400;">475 ms</div>
<div class="t" style="left:1716.20px;top:545.29px;font-size:9.40px;line-height:9.40px;color:#1a1a1a;font-weight:400;">640.29 m</div>
<div class="t" style="left:1848.20px;top:545.29px;font-size:9.40px;line-height:9.40px;color:#1a1a1a;font-weight:400;">0 us</div>
<div class="t" style="left:331.70px;top:571.54px;font-size:9.40px;line-height:9.40px;color:#1a1a1a;font-weight:400;">2019-12-26 00:11:54 (CET)</div>
<div class="t" style="left:545.70px;top:571.54px;font-size:9.40px;line-height:9.40px;color:#1a1a1a;font-weight:400;">SELECT hostname, port FROM ext_proc WHERE cid = 505 AND proc_name = &#x27;memcached&#x27;</div>
<div class="t" style="left:1406.70px;top:571.54px;font-size:9.40px;line-height:9.40px;color:#1a1a1a;font-weight:400;">4.4 s</div>
<div class="t" style="left:1498.70px;top:571.54px;font-size:9.40px;line-height:9.40px;color:#1a1a1a;font-weight:400;">1.65 ms</div>
<div class="t" style="left:1626.70px;top:571.54px;font-size:9.40px;line-height:9.40px;color:#1a1a1a;font-weight:400;">436 ms</div>
<div class="t" style="left:1716.20px;top:571.54px;font-size:9.40px;line-height:9.40px;color:#1a1a1a;font-weight:400;">22 s</div>
<div class="t" style="left:1848.20px;top:571.54px;font-size:9.40px;line-height:9.40px;color:#1a1a1a;font-weight:400;">0 us</div>
<div class="t" style="left:331.70px;top:597.79px;font-size:9.40px;line-height:9.40px;color:#1a1a1a;font-weight:400;">2019-12-26 00:11:51 (CET)</div>
<div class="t" style="left:545.70px;top:597.79px;font-size:9.40px;line-height:9.40px;color:#1a1a1a;font-weight:400;">DELETE FROM outgoing_messages WHERE (status = &#x27;Sent&#x27; OR status = &#x27;Failed&#x27;) AND created &lt; &#x27;2019-12-1...</div>
<div class="t" style="left:1406.70px;top:597.79px;font-size:9.40px;line-height:9.40px;color:#1a1a1a;font-weight:400;">1.7 s</div>
<div class="t" style="left:1498.70px;top:597.79px;font-size:9.40px;line-height:9.40px;color:#1a1a1a;font-weight:400;">1.07 ms</div>
<div class="t" style="left:1626.70px;top:597.79px;font-size:9.40px;line-height:9.40px;color:#1a1a1a;font-weight:400;">156 ms</div>
<div class="t" style="left:1716.20px;top:597.79px;font-size:9.40px;line-height:9.40px;color:#1a1a1a;font-weight:400;">17.1 s</div>
<div class="t" style="left:1848.20px;top:597.79px;font-size:9.40px;line-height:9.40px;color:#1a1a1a;font-weight:400;">0 us</div>
<div class="t" style="left:331.70px;top:624.04px;font-size:9.40px;line-height:9.40px;color:#1a1a1a;font-weight:400;">2019-12-26 00:11:54 (CET)</div>
<div class="t" style="left:545.70px;top:624.04px;font-size:9.40px;line-height:9.40px;color:#1a1a1a;font-weight:400;">SELECT message_id, subject, body, status, component, retry_count FROM outgoing_messages WHERE ci...</div>
<div class="t" style="left:1406.70px;top:624.04px;font-size:9.40px;line-height:9.40px;color:#1a1a1a;font-weight:400;">3.6 s</div>
<div class="t" style="left:1498.70px;top:624.04px;font-size:9.40px;line-height:9.40px;color:#1a1a1a;font-weight:400;">982 us</div>
<div class="t" style="left:1626.70px;top:624.04px;font-size:9.40px;line-height:9.40px;color:#1a1a1a;font-weight:400;">331 ms</div>
<div class="t" style="left:1716.20px;top:624.04px;font-size:9.40px;line-height:9.40px;color:#1a1a1a;font-weight:400;">18.2 s</div>
<div class="t" style="left:1848.20px;top:624.04px;font-size:9.40px;line-height:9.40px;color:#1a1a1a;font-weight:400;">0 us</div>
<div class="t" style="left:331.70px;top:650.29px;font-size:9.40px;line-height:9.40px;color:#1a1a1a;font-weight:400;">2019-12-26 00:11:37 (CET)</div>
<div class="t" style="left:545.70px;top:650.29px;font-size:9.40px;line-height:9.40px;color:#1a1a1a;font-weight:400;">SELECT recipient, component, severity, delivery_type FROM message_filters WHERE cid = 1</div>
<div class="t" style="left:1406.70px;top:650.29px;font-size:9.40px;line-height:9.40px;color:#1a1a1a;font-weight:400;">2.4 s</div>
<div class="t" style="left:1498.70px;top:650.29px;font-size:9.40px;line-height:9.40px;color:#1a1a1a;font-weight:400;">737 us</div>
<div class="t" style="left:1626.70px;top:650.29px;font-size:9.40px;line-height:9.40px;color:#1a1a1a;font-weight:400;">198 ms</div>
<div class="t" style="left:1716.20px;top:650.29px;font-size:9.40px;line-height:9.40px;color:#1a1a1a;font-weight:400;">20.5 s</div>
<div class="t" style="left:1848.20px;top:650.29px;font-size:9.40px;line-height:9.40px;color:#1a1a1a;font-weight:400;">0 us</div>
<div class="t" style="left:566.00px;width:1000px;text-align:center;top:880.46px;font-size:9.50px;line-height:9.50px;color:#333;font-weight:400;">© Copyright Severalnines 2019 All Rights Reserved</div>
<div class="t" style="left:566.00px;width:1000px;text-align:center;top:892.96px;font-size:9.50px;line-height:9.50px;color:#333;font-weight:400;">Controller: <b>1.7.5</b>, Frontend: <b>1.7.5.6597-#21c64f</b>, License: <b>Active</b></div>
<div style="position:absolute;left:1998px;top:0px;width:1px;height:918px;background:#0b0b12"></div>
<div style="position:absolute;left:0px;top:917px;width:1999px;height:1px;background:#0b0b12"></div>
</div></body></html>
